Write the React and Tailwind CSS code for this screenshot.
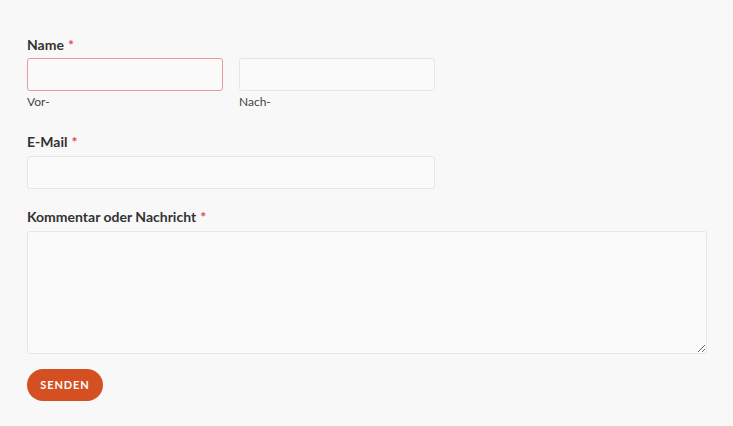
import React from 'react';

const Req = () => <span className="text-[#e0474c] ml-1">*</span>;

export default function App() {
    return (
        <main className="min-h-screen bg-[#f8f8f8] font-['Lato','Liberation_Sans',sans-serif] text-[#333]">
            <form className="pl-[27px] pt-[35px]" onSubmit={(e) => e.preventDefault()}>
                <div className="mb-[21px]">
                    <label className="block text-[14px] leading-[20px] font-bold mb-[3px]">
                        Name<Req />
                    </label>
                    <div className="flex gap-[16px]">
                        <div className="w-[196px]">
                            <input type="text" className="block w-full h-[33px] rounded-[3px] border border-[#e79a9a] bg-[#fafafa] px-2 outline-none" />
                            <span className="block text-[12px] leading-[19px] mt-px text-[#444]">Vor-</span>
                        </div>
                        <div className="w-[196px]">
                            <input type="text" className="block w-full h-[33px] rounded-[3px] border border-[#e6e6e6] bg-[#fafafa] px-2 outline-none" />
                            <span className="block text-[12px] leading-[19px] mt-px text-[#444]">Nach-</span>
                        </div>
                    </div>
                </div>

                <div className="mb-[18px]">
                    <label className="block text-[14px] leading-[20px] font-bold mb-[4px]">
                        E-Mail<Req />
                    </label>
                    <input type="email" className="block w-[408px] h-[33px] rounded-[3px] border border-[#e6e6e6] bg-[#fafafa] px-2 outline-none" />
                </div>

                <div className="mb-[15px]">
                    <label className="block text-[14px] leading-[20px] font-bold mb-[4px]">
                        Kommentar oder Nachricht<Req />
                    </label>
                    <textarea className="block w-[680px] h-[123px] rounded-[3px] border border-[#e6e6e6] bg-[#fafafa] px-2 outline-none" />
                </div>

                <button type="submit" className="w-[76px] h-[32px] rounded-full bg-[#d44f22] text-white text-[11px] font-bold tracking-[0.08em]">
                    SENDEN
                </button>
            </form>
        </main>
    );
}
